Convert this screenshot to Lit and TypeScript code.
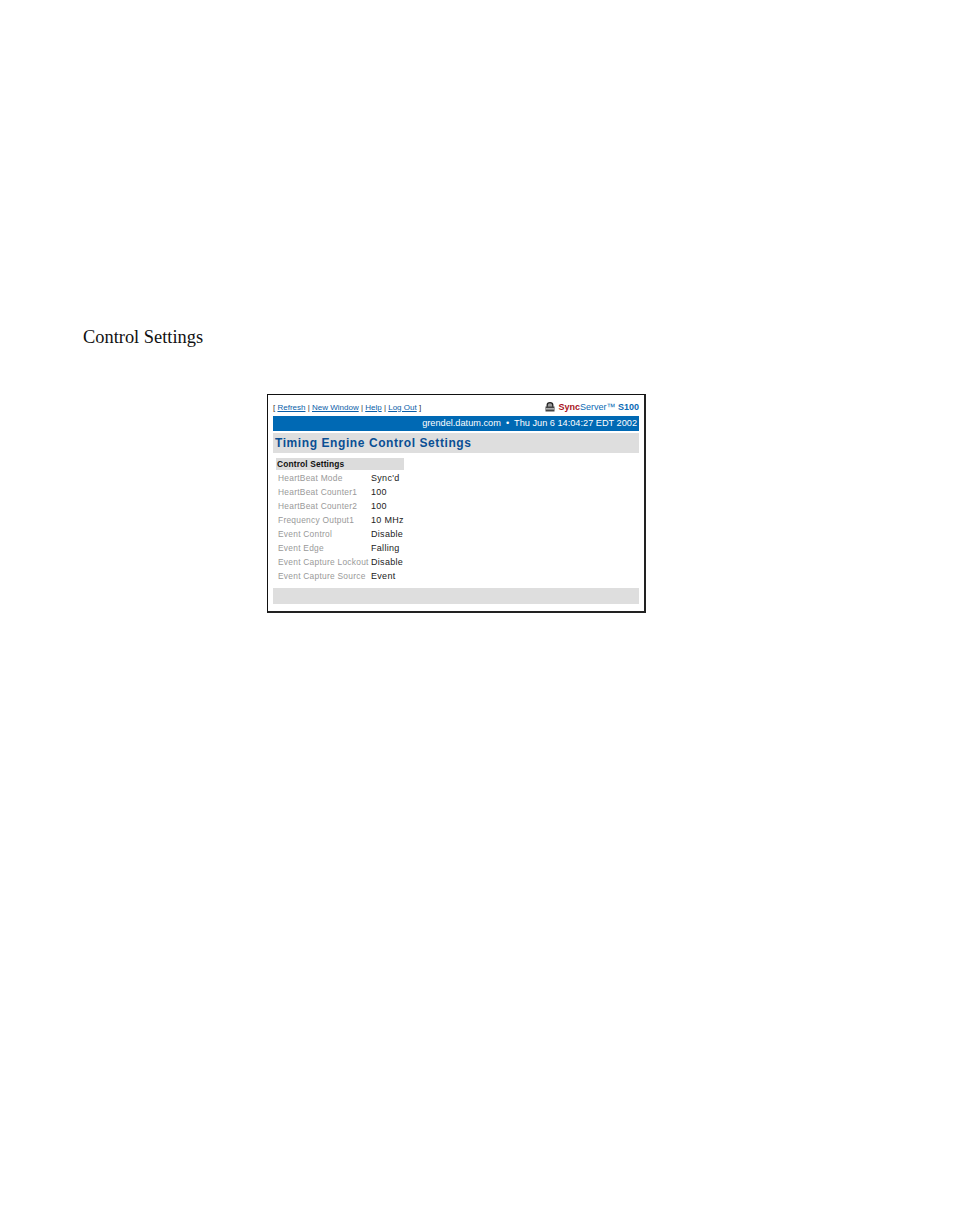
import { LitElement, html, css, svg } from "lit";
import { customElement } from "lit/decorators.js";

const rows: [string, string][] = [
  ["HeartBeat Mode", "Sync'd"],
  ["HeartBeat Counter1", "100"],
  ["HeartBeat Counter2", "100"],
  ["Frequency Output1", "10 MHz"],
  ["Event Control", "Disable"],
  ["Event Edge", "Falling"],
  ["Event Capture Lockout", "Disable"],
  ["Event Capture Source", "Event"],
];

const lock = svg`<svg class="lock" width="10" height="10" viewBox="0 0 10 10">
  <path d="M2.2 5V3a2.8 2.3 0 0 1 5.6 0v2" fill="#999" stroke="#222" stroke-width="1.3"/>
  <rect x="0.5" y="4.5" width="9" height="5" fill="#444"/>
  <rect x="1" y="6.2" width="8" height="1.3" fill="#c8c8c8"/>
</svg>`;

@customElement("app-root")
export class AppRoot extends LitElement {
  static styles = css`
    :host { display: block; width: 954px; height: 1217px; background: #fff; overflow: hidden; }
    .heading {
      margin: 0; padding: 327px 0 0 83px;
      font: 18.4px/20px "Liberation Serif", serif; color: #111;
    }
    .frame {
      box-sizing: border-box; width: 379px; height: 219px; margin: 47px 0 0 267px;
      border: 1px solid #111; border-right: 2px solid #222; border-bottom: 2px solid #222;
      padding: 5px 5px 0 5px;
      font-family: "Liberation Sans", Arial, sans-serif;
      display: flex; flex-direction: column;
    }
    .top {
      height: 14px; padding-bottom: 2px; display: flex; justify-content: space-between; align-items: center;
      font-size: 8px; color: #333;
    }
    .top a { color: #0a5ea8; text-decoration: underline; }
    .brand { display: flex; align-items: center; gap: 3px; font-size: 9px; font-weight: 700; color: #0a6ab4; }
    .brand b { color: #a8121c; }
    .brand .name { font-weight: 400; }
    .bar {
      height: 15px; background: #0069b4; color: #fff;
      font-size: 9.2px; line-height: 15px; text-align: right; padding-right: 2px;
    }
    .title {
      height: 20px; margin-top: 2px; background: #dedede; color: #0a4f94;
      font-size: 12px; font-weight: 700; line-height: 20px; padding-left: 2px; letter-spacing: 0.58px;
    }
    .section {
      width: 128px; height: 12px; margin: 5px 0 0 3px; background: #dcdcdc;
      font-size: 8.4px; font-weight: 700; line-height: 12px; letter-spacing: 0.14px; color: #111; padding-left: 1px; box-sizing: border-box;
    }
    .rows { margin: 1px 0 0 5px; display: grid; grid-template-columns: 93px auto; grid-auto-rows: 14px; justify-content: start; }
    .rows span { line-height: 14px; white-space: nowrap; }
    .k { font-size: 8.4px; letter-spacing: 0.26px; color: #999; }
    .v { font-size: 9px; letter-spacing: 0.3px; color: #222; }
    .foot { height: 16px; margin-top: 5px; background: #dedede; }
  `;

  render() {
    return html`
      <p class="heading">Control Settings</p>
      <div class="frame">
        <div class="top">
          <span>[ <a>Refresh</a> | <a>New Window</a> | <a>Help</a> | <a>Log Out</a> ]</span>
          <span class="brand">${lock}<span><b>Sync</b><span class="name">Server™</span> S100</span></span>
        </div>
        <div class="bar">grendel.datum.com &nbsp;•&nbsp; Thu Jun 6 14:04:27 EDT 2002</div>
        <div class="title">Timing Engine Control Settings</div>
        <div class="section">Control Settings</div>
        <div class="rows">
          ${rows.map(([k, v]) => html`<span class="k">${k}</span><span class="v">${v}</span>`)}
        </div>
        <div class="foot"></div>
      </div>
    `;
  }
}
